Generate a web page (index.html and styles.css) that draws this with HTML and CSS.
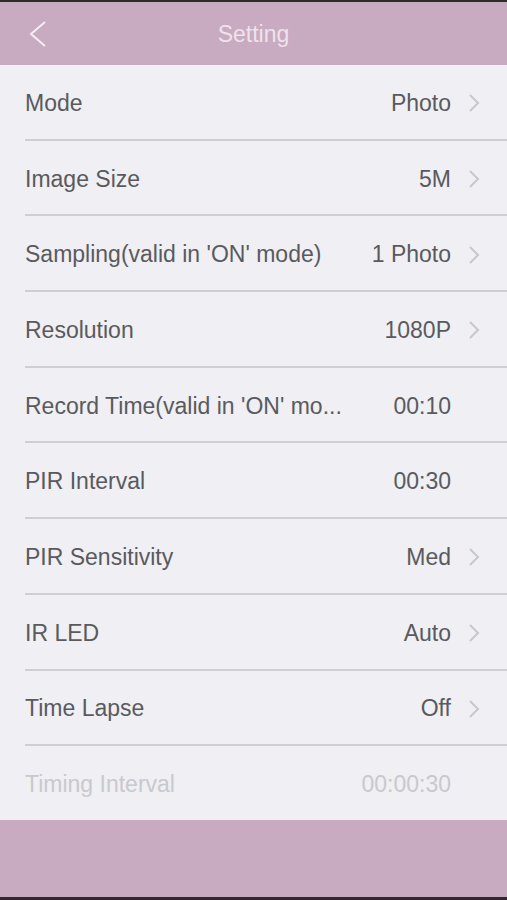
FILE: index.html
```html
<!DOCTYPE html>
<html lang="en">
<head>
  <meta charset="UTF-8">
  <meta name="viewport" content="width=device-width, initial-scale=1.0">
  <title>Setting</title>
  <link rel="stylesheet" href="styles.css">
</head>
<body>
  <div class="screen">

    <!-- Top bar -->
    <div class="topbar">
      <span class="back">
        <svg width="20" height="28" viewBox="0 0 20 28"><path d="M18 2 L4 14 L18 26" fill="none" stroke="#f6eef3" stroke-width="2"/></svg>
      </span>
      <h1 class="title">Setting</h1>
    </div>

    <!-- Settings list -->
    <div class="list">
      <div class="row">
        <span class="label">Mode</span>
        <span class="value">Photo</span>
        <span class="arrow"><svg width="12" height="20" viewBox="0 0 12 20"><path d="M2 2 L10 10 L2 18" fill="none" stroke="#c7c7cc" stroke-width="2"/></svg></span>
      </div>
      <div class="row">
        <span class="label">Image Size</span>
        <span class="value">5M</span>
        <span class="arrow"><svg width="12" height="20" viewBox="0 0 12 20"><path d="M2 2 L10 10 L2 18" fill="none" stroke="#c7c7cc" stroke-width="2"/></svg></span>
      </div>
      <div class="row">
        <span class="label">Sampling(valid in 'ON' mode)</span>
        <span class="value">1 Photo</span>
        <span class="arrow"><svg width="12" height="20" viewBox="0 0 12 20"><path d="M2 2 L10 10 L2 18" fill="none" stroke="#c7c7cc" stroke-width="2"/></svg></span>
      </div>
      <div class="row">
        <span class="label">Resolution</span>
        <span class="value">1080P</span>
        <span class="arrow"><svg width="12" height="20" viewBox="0 0 12 20"><path d="M2 2 L10 10 L2 18" fill="none" stroke="#c7c7cc" stroke-width="2"/></svg></span>
      </div>
      <div class="row">
        <span class="label">Record Time(valid in 'ON' mo...</span>
        <span class="value">00:10</span>
        <span class="arrow"></span>
      </div>
      <div class="row">
        <span class="label">PIR Interval</span>
        <span class="value">00:30</span>
        <span class="arrow"></span>
      </div>
      <div class="row">
        <span class="label">PIR Sensitivity</span>
        <span class="value">Med</span>
        <span class="arrow"><svg width="12" height="20" viewBox="0 0 12 20"><path d="M2 2 L10 10 L2 18" fill="none" stroke="#c7c7cc" stroke-width="2"/></svg></span>
      </div>
      <div class="row">
        <span class="label">IR LED</span>
        <span class="value">Auto</span>
        <span class="arrow"><svg width="12" height="20" viewBox="0 0 12 20"><path d="M2 2 L10 10 L2 18" fill="none" stroke="#c7c7cc" stroke-width="2"/></svg></span>
      </div>
      <div class="row">
        <span class="label">Time Lapse</span>
        <span class="value">Off</span>
        <span class="arrow"><svg width="12" height="20" viewBox="0 0 12 20"><path d="M2 2 L10 10 L2 18" fill="none" stroke="#c7c7cc" stroke-width="2"/></svg></span>
      </div>
      <div class="row disabled last">
        <span class="label">Timing Interval</span>
        <span class="value">00:00:30</span>
        <span class="arrow"></span>
      </div>
    </div>

    <!-- Bottom bar -->
    <div class="bottombar"></div>

  </div>
</body>
</html>
```

FILE: styles.css
```css
* {
  box-sizing: border-box;
}
body, html {
  margin: 0;
  padding: 0;
  width: 100%;
  height: 100%;
  font-family: "Liberation Sans", Arial, sans-serif;
  background-color: #2b2b2b;
}
.screen {
  display: flex;
  flex-direction: column;
  height: 900px;
  padding: 2px 0 3px;
}
.topbar {
  height: 63px;
  background-color: #c8abc1;
  display: flex;
  align-items: center;
  justify-content: center;
  position: relative;
}
.back {
  position: absolute;
  left: 27px;
  top: 18px;
}
.title {
  margin: 0;
  font-size: 23px;
  font-weight: normal;
  color: #efe2eb;
  padding-top: 2px;
}
.list {
  flex: 1;
  background-color: #efeff4;
}
.row {
  height: 75.7px;
  margin-left: 25px;
  display: flex;
  align-items: center;
  border-bottom: 2px solid #cfcfd3;
  font-size: 23px;
  color: #5a5a5e;
  padding-top: 3px;
}
.row.last {
  border-bottom: none;
  height: 73px;
}
.label {
  flex: 1;
  white-space: nowrap;
  min-width: 0;
}
.value {
  margin-left: 10px;
  white-space: nowrap;
  text-align: right;
}
.arrow {
  width: 56px;
  display: flex;
  justify-content: flex-start;
  padding-left: 17px;
}
.disabled {
  color: #c9c9cd;
}
.bottombar {
  height: 77px;
  background-color: #c8abc1;
}
```
